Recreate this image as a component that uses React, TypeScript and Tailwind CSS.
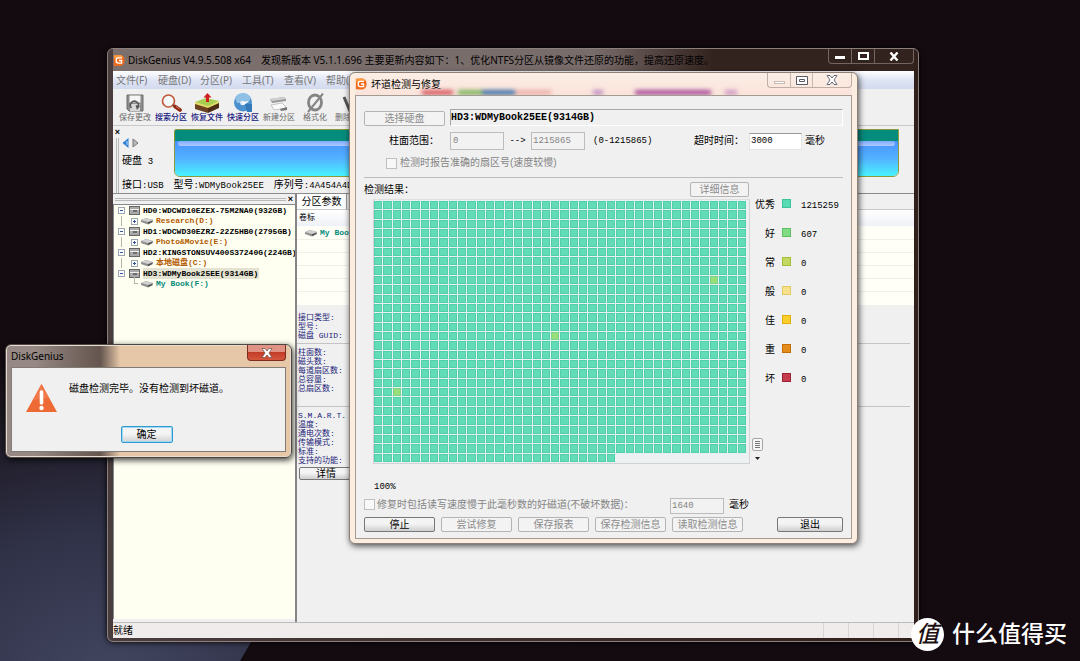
import type { ReactNode } from "react"

const TOTAL_BLOCKS = 27 * 40 + 26
const SLOW_BLOCKS = [8 * 40 + 36, 14 * 40 + 19, 20 * 40 + 2]

const MENU = ["文件(F)", "硬盘(D)", "分区(P)", "工具(T)", "查看(V)", "帮助(H)"]

const DISKS = [
  { name: "HD0:WDCWD10EZEX-75M2NA0(932GB)", part: "Research(D:)", color: "text-[#b35a00]" },
  { name: "HD1:WDCWD30EZRZ-22Z5HB0(2795GB)", part: "Photo&Movie(E:)", color: "text-[#b35a00]" },
  { name: "HD2:KINGSTONSUV400S37240G(224GB)", part: "本地磁盘(C:)", color: "text-[#b35a00]" },
  { name: "HD3:WDMyBook25EE(9314GB)", part: "My Book(F:)", color: "text-[#078a7c]", selected: true },
]

const INFO = [
  ["接口类型:", "型号:", "磁盘 GUID:"],
  ["柱面数:", "磁头数:", "每道扇区数:", "总容量:", "总扇区数:"],
  ["S.M.A.R.T. 信息:", "温度:", "通电次数:", "传输模式:", "标准:", "支持的功能:"],
]

const LEGEND = [
  { label: "优秀", color: "bg-[#58dbb2] border-[#3cc39b]", count: "1215259" },
  { label: "好", color: "bg-[#82dc86] border-[#5cc063]", count: "607" },
  { label: "常", color: "bg-[#c2d860] border-[#a2bd3a]", count: "0" },
  { label: "般", color: "bg-[#f7e18c] border-[#e2c765]", count: "0" },
  { label: "佳", color: "bg-[#fcd02c] border-[#e2ad0c]", count: "0" },
  { label: "重", color: "bg-[#e58d1c] border-[#c06f08]", count: "0" },
  { label: "坏", color: "bg-[#c53c4c] border-[#9c2233]", count: "0" },
]

const mono = "font-['Liberation_Mono','Noto_Sans_CJK_SC',monospace]"
const sans = "font-['Noto_Sans','Noto_Sans_CJK_SC',sans-serif]"

function Logo({ className }: { className: string }) {
  return (
    <svg viewBox="0 0 14 14" className={className} aria-hidden="true">
      <path d="M1 1 L9 .5 Q13.5 2 13.5 7 T9 13.5 L1 13 Z" fill="#f26a1b" />
      <path d="M1 1 L9 .5 Q11 1 12 3 L1 5 Z" fill="#fb9a3c" />
      <path d="M10.5 4 H6 Q3.7 4 3.7 7 T6 10 H10 V7 H7" fill="none" stroke="#fff" strokeWidth="1.5" />
    </svg>
  )
}

function SaveIcon() {
  return (
    <svg viewBox="0 0 20 20" className="h-5 w-5">
      <path d="M2 2 H18 V18 H4 L2 16 Z" fill="#8d8d8d" stroke="#6c6c6c" />
      <rect x="4.500" y="2.500" width="11" height="7" fill="#f4f4f4" />
      <rect x="5" y="11" width="10" height="7" fill="#d9d9d9" />
      <path d="M6.500 15 A4 4 0 1 1 13 14" fill="none" stroke="#555" strokeWidth="1.600" />
      <path d="M10.500 12 L15 13 L12 17 Z" fill="#555" />
    </svg>
  )
}

function SearchIcon() {
  return (
    <svg viewBox="0 0 22 20" className="h-5 w-[22px]">
      <circle cx="8.500" cy="8" r="6" fill="#f4f8fb" stroke="#c25a3a" strokeWidth="1.700" />
      <path d="M12.500 12 L15 13.500" stroke="#8c4a30" strokeWidth="2" />
      <path d="M15 13.500 L20 17" stroke="#8e2c18" strokeWidth="3.800" strokeLinecap="round" />
      <path d="M16 13.500 L19.500 15.800" stroke="#d8765a" strokeWidth="1" />
    </svg>
  )
}

function RecoverIcon() {
  return (
    <svg viewBox="0 0 26 20" className="h-5 w-[26px]">
      <path d="M1 10 L14 14 V20 L1 16 Z" fill="#6b4322" />
      <path d="M14 14 L25 9 V15 L14 20 Z" fill="#4c2c14" />
      <path d="M1 9 L12 5 L25 8 L14 14 Z" fill="#a9cf52" />
      <path d="M1 9 L14 13 L25 8 V10 L14 15 L1 11 Z" fill="#e3dc6a" />
      <path d="M13.500 0 L17.500 4.500 H15 V9 H12 V4.500 H9.500 Z" fill="#cf1f1f" />
    </svg>
  )
}

function QuickIcon() {
  return (
    <svg viewBox="0 0 20 20" className="h-5 w-5">
      <circle cx="10" cy="9.500" r="9" fill="#4a90cc" />
      <path d="M2 5 A9 9 0 0 1 18 5 L15 10 H4 Z" fill="#8fc0e6" />
      <path d="M12 11 H19 V19 H14 Z" fill="#3378b8" />
      <circle cx="9.500" cy="10" r="2.300" fill="#e8f2fb" />
      <path d="M10 9 L16 8 L11 12 Z" fill="#fff" />
    </svg>
  )
}

function NewIcon() {
  return (
    <svg viewBox="0 0 20 20" className="h-5 w-5">
      <path d="M1 6 L15 4 L17 6 V8 L3 10 Z" fill="#999" />
      <path d="M1 6 L15 4 L17 6 L3 8 Z" fill="#d0d0d0" />
      <path d="M2 12 L13 10 L18 15 L5 17 Z" fill="#fafafa" stroke="#b8b8b8" strokeWidth="0.800" />
      <path d="M11 16 L18 14 V17 L12 18 Z" fill="#777" />
    </svg>
  )
}

function FormatIcon() {
  return (
    <svg viewBox="0 0 20 20" className="h-5 w-5">
      <ellipse cx="10" cy="9.500" rx="6.500" ry="7.500" fill="none" stroke="#858585" strokeWidth="2.800" />
      <path d="M18 .5 L3 19" stroke="#858585" strokeWidth="2" />
    </svg>
  )
}

function DeleteIcon() {
  return (
    <svg viewBox="0 0 20 20" className="h-5 w-5">
      <path d="M3 4 L9 18 L17 3" fill="none" stroke="#555" strokeWidth="3" />
    </svg>
  )
}

const TOOLS = [
  { label: "保存更改", icon: <SaveIcon />, color: "text-[#6a6a6a]" },
  { label: "搜索分区", icon: <SearchIcon />, color: "text-[#15157e] font-medium" },
  { label: "恢复文件", icon: <RecoverIcon />, color: "text-[#15157e] font-medium" },
  { label: "快速分区", icon: <QuickIcon />, color: "text-[#15157e] font-medium" },
  { label: "新建分区", icon: <NewIcon />, color: "text-[#6a6a6a]" },
  { label: "格式化", icon: <FormatIcon />, color: "text-[#6a6a6a]" },
  { label: "删除分区", icon: <DeleteIcon />, color: "text-[#6a6a6a]" },
]

function DriveIcon() {
  return (
    <svg viewBox="0 0 12 8" className="h-2 w-3 shrink-0">
      <path d="M0 3 L5 1 L12 3 V5 L7 7.500 L0 5 Z" fill="#8f8f8f" />
      <path d="M0 3 L5 1 L12 3 L7 5 Z" fill="#d0d0d0" />
      <path d="M7 5.500 L11 4 V5 L7 7 Z" fill="#444" />
    </svg>
  )
}

function DiskIcon() {
  return (
    <svg viewBox="0 0 11 9" className="h-[9px] w-[11px] shrink-0">
      <rect x=".5" y=".5" width="10" height="8" fill="#a9a9a9" stroke="#666" />
      <path d="M1 3.500 H10" stroke="#eee" />
      <path d="M4 5 H8" stroke="#333" />
    </svg>
  )
}

function Expander({ open }: { open?: boolean }) {
  return (
    <svg viewBox="0 0 7 7" className="z-10 h-[7px] w-[7px] shrink-0">
      <rect x=".5" y=".5" width="6" height="6" fill="#fff" stroke="#9aa6b4" />
      <path d={open ? "M2 3.500 H5" : "M2 3.500 H5 M3.500 2 V5"} stroke="#35559c" />
    </svg>
  )
}

function FlatButton({ children, className }: { children: ReactNode; className: string }) {
  return (
    <button disabled className={`h-[15px] rounded-xs border border-[#b4b4b4] bg-[#f3f3f3] text-[10px] leading-none text-[#8c8c8c] ${className}`}>
      {children}
    </button>
  )
}

function DialogButton({ children, className }: { children: ReactNode; className: string }) {
  return (
    <button className={`h-[15px] rounded-xs border border-[#777] bg-linear-to-b from-[#f4f4f4] from-45% to-[#cfcfcf] text-[10px] leading-none text-black ${className}`}>
      {children}
    </button>
  )
}

function DiskTree() {
  return (
    <ul className={`flex-1 border-t border-l border-[#828790] bg-[#fefff0] pl-[4px] text-[8px] font-bold ${mono}`}>
      {DISKS.map((disk) => (
        <li key={disk.name}>
          <div className="flex h-[11px] items-center gap-1 whitespace-nowrap">
            <Expander open />
            <DiskIcon />
            <span className={disk.selected ? "-ml-px bg-[#e4e2d0] pr-px leading-[11px] text-black" : "-ml-px leading-[11px] text-black"}>{disk.name}</span>
          </div>
          <div className={`ml-[3px] flex h-[10px] items-center gap-[3px] border-[#b5b5a8] pl-[9px] whitespace-nowrap ${disk.selected ? "" : "border-l"}`}>
            {disk.selected ? <span className="-mt-2 ml-1 h-2 w-1 border-b border-l border-[#b5b5a8]" /> : <Expander />}
            <DriveIcon />
            <span className={`leading-[10px] ${disk.color}`}>{disk.part}</span>
          </div>
        </li>
      ))}
    </ul>
  )
}

function DiskBar() {
  return (
    <section className="flex h-[68px] border-b border-[#8a8a8a] bg-[#f0f0f0]">
      <div className="flex w-[9px] flex-col items-center gap-[2px] pt-[2px]">
        <button aria-label="关闭" className="text-[9px] leading-[8px] font-bold text-black">×</button>
        <span className="w-[3px] flex-1 border-x border-[#b9b9b9]" />
      </div>
      <div className="flex flex-1 flex-col pr-[15px]">
        <div className="flex flex-1 pt-[3px]">
          <div className="w-[52px] pt-[9px]">
            <div className="flex gap-[3px]">
              <svg viewBox="0 0 7 10" className="h-[10px] w-[7px]"><path d="M6.500 0 V10 L.5 5 Z" fill="#2a7fd4" /><path d="M5 3 V7" stroke="#bfe2ff" /></svg>
              <svg viewBox="0 0 7 10" className="h-[10px] w-[7px]"><path d="M1 1 V9 L6 5 Z" fill="#bbb" stroke="#777" /></svg>
            </div>
            <p className="mt-[6px] text-[10px] leading-[14px] text-black">硬盘 <span className={`ml-[3px] text-[9px] ${mono}`}>3</span></p>
          </div>
          <div className="flex h-[48px] flex-1 flex-col overflow-hidden rounded-tl-xs rounded-b-md border border-[#8b9a3a]">
            <div className="h-[11px] bg-[#058c7d]" />
            <div className="flex-1 bg-linear-to-b from-[#4c92ff] via-[#51b2ff] to-[#48f2ff] px-[3px]">
              <div className="h-[5px] rounded-full bg-linear-to-b from-[#7dacff] to-[#b0c9ff]" />
            </div>
          </div>
        </div>
        <p className={`flex gap-[10px] text-[10px] leading-[14px] whitespace-nowrap text-black ${sans}`}>
          <span>接口<span className={`text-[9px] ${mono}`}>:USB</span></span>
          <span>型号<span className={`text-[9px] ${mono}`}>:WDMyBook25EE</span></span>
          <span>序列号<span className={`text-[9px] ${mono}`}>:4A454A4D</span></span>
        </p>
      </div>
    </section>
  )
}

function DetailPane() {
  return (
    <section className="flex flex-1 flex-col overflow-hidden border-l-2 border-[#858585] bg-[#f0f0f0]">
      <div className="flex h-[16px] items-end border-b border-[#c8c8c8]">
        <button className="h-[15px] w-[50px] border-r border-[#999] bg-white text-[10px] leading-[14px] whitespace-nowrap text-black">分区参数</button>
      </div>
      <div className="flex h-[16px] items-center bg-linear-to-b from-white to-[#eef1f8] pl-[2px] text-[8px] text-black">卷标</div>
      <div className="divide-y divide-[#f0efe8] bg-[#fffff8]">
        <div className={`flex h-[14px] items-center gap-[3px] pl-[8px] text-[8px] font-bold text-[#078a7c] ${mono}`}>
          <DriveIcon />
          My Book(F:)
        </div>
        {[0, 1, 2, 3, 4].map((row) => <div key={row} className="h-[13px]" />)}
      </div>
      <div className={`pt-[5px] text-[8px] leading-[9px] text-[#1c1c78] ${mono}`}>
        {INFO.map((group, i) => (
          <div key={i} className={i ? "mr-[4px] border-t border-[#c4c4c4] pt-[4px]" : "pt-[3px] pb-[3px]"}>
            {group.map((line) => <p key={line} className="pl-px whitespace-nowrap">{line}</p>)}
            {i === 1 && <div className="h-[13px]" />}
          </div>
        ))}
      </div>
      <DialogButton className="mt-[2px] ml-[2px] h-[13px]! w-[54px]">详情</DialogButton>
    </section>
  )
}

function MainWindow() {
  return (
    <main className="absolute top-[48px] left-[107px] flex h-[594px] w-[812px] flex-col rounded-md border border-[#8b7f7c] bg-linear-to-r from-[#4a3d3d] to-[#30201c] pr-[4px] pb-[3px] pl-[5px] shadow-[0_0_6px_#000]">
      <header className="flex h-[22px] shrink-0 items-center gap-[3px] bg-linear-to-r from-[#7c706f] via-[#786c6a] via-60% to-[#33231f] to-75%">
        <Logo className="h-[13px] w-3" />
        <h1 className={`flex flex-1 gap-[10px] text-[10px] whitespace-nowrap text-black ${sans}`}>
          <span>DiskGenius V4.9.5.508 x64</span>
          <span>发现新版本 V5.1.1.696 主要更新内容如下：1、优化NTFS分区从镜像文件还原的功能，提高还原速度。</span>
        </h1>
        <div className="flex h-[15px] divide-x divide-[#75645f] self-start rounded-b-sm border border-t-0 border-[#75645f]">
          <button aria-label="最小化" className="flex w-[23px] items-end justify-center pb-[4px]"><span className="h-[3px] w-[10px] bg-white" /></button>
          <button aria-label="最大化" className="flex w-[23px] items-center justify-center"><span className="h-2 w-[11px] border-2 border-white" /></button>
          <button aria-label="关闭" className="flex w-[38px] items-center justify-center">
            <svg viewBox="0 0 10 9" className="h-[9px] w-[10px]"><path d="M1.500 .5 L8.500 8.500 M8.500 .5 L1.500 8.500" stroke="#fff" strokeWidth="2.400" /></svg>
          </button>
        </div>
      </header>
      <div className="flex flex-1 flex-col overflow-hidden bg-[#f0f0f0]">
        <nav className={`flex h-[18px] shrink-0 items-center gap-[7px] bg-linear-to-b from-white via-[#dfe5f5] to-[#d3daee] pl-[3px] text-[10px] text-[#777] ${sans}`}>
          {MENU.map((item) => <button key={item} className="w-[35px] text-left whitespace-nowrap">{item}</button>)}
        </nav>
        <div className="flex h-[37px] shrink-0 border-b border-[#c9c9c9] pl-[4px]">
          {TOOLS.map((tool) => (
            <button key={tool.label} className={`flex w-[36px] flex-col items-center pt-[4px] text-[8px] leading-[10px] whitespace-nowrap ${tool.color}`}>
              {tool.icon}
              {tool.label}
            </button>
          ))}
        </div>
        <DiskBar />
        <div className="flex flex-1 overflow-hidden">
          <aside className="flex w-[182px] flex-col pb-[3px]">
            <div className="flex h-[10px] items-center gap-[2px] px-[2px]">
              <span className="h-[3px] flex-1 border-y border-[#b9b9b9]" />
              <button aria-label="关闭" className="text-[9px] leading-none font-bold text-black">×</button>
            </div>
            <DiskTree />
          </aside>
          <DetailPane />
        </div>
        <footer className="flex h-[16px] shrink-0 items-center border-t border-[#bcbcbc] bg-[#f0eceb] text-[10px] leading-none text-black">
          <span className="flex-1">就绪</span>
          <span className="flex h-full w-[91px] divide-x divide-[#ddd4d2] overflow-hidden border-l border-[#ddd4d2]">
            {[0, 1, 2, 3].map((cell) => <span key={cell} className="w-[25px] shrink-0" />)}
          </span>
        </footer>
      </div>
    </main>
  )
}

function BlockMap() {
  return (
    <div className="h-[265px] w-[377px] border border-[#d2d2d2] border-t-[#e0e0e0] bg-[#eef1f1] pt-px pr-[3px] pb-px">
      <div className="grid h-full grid-cols-[repeat(40,minmax(0,1fr))] grid-rows-[repeat(28,minmax(0,1fr))] gap-px">
        {Array.from({ length: TOTAL_BLOCKS }, (_, i) => (
          <span key={i} className={SLOW_BLOCKS.includes(i) ? "border border-[#7bd28a] bg-[#98df78]" : "border border-[#4fd0aa] bg-[#62dbb7]"} />
        ))}
      </div>
    </div>
  )
}

function RepairDialog() {
  return (
    <section role="dialog" aria-label="坏道检测与修复" className="absolute top-[72px] left-[349px] flex h-[472px] w-[509px] flex-col rounded-md border border-[#8c8078] bg-[#fbeee0] px-[5px] pb-[4px] shadow-[1px_2px_6px_rgba(0,0,0,0.7)]">
      <header className="relative flex h-[22px] shrink-0 items-center gap-1 overflow-hidden bg-linear-to-b from-[#fbeee5] to-[#fae3da]">
        <div className="absolute bottom-0 left-[67px] flex h-[5px] blur-[2px]">
          <span className="w-[31px] bg-[#d65a62]" />
          <span className="ml-[5px] w-[24px] bg-[#7db35b]" />
          <span className="w-[33px] bg-[#3d70a6]" />
          <span className="w-[36px] bg-[#ecb2ac]" />
          <span className="ml-[42px] w-[10px] bg-[#c090c4]" />
          <span className="ml-[32px] w-[76px] bg-[#a84f9d]" />
          <span className="ml-[14px] w-[12px] bg-[#d099c4]" />
        </div>
        <Logo className="z-10 h-[14px] w-3" />
        <h2 className={`z-10 flex-1 text-[10px] text-black ${sans}`}>坏道检测与修复</h2>
        <div className="z-10 flex h-[15px] divide-x divide-[#cbb8ad] self-start rounded-b-sm border border-t-0 border-[#c0aea4]">
          <button aria-label="最小化" className="flex w-[23px] items-end justify-center pb-[3px]"><span className="h-[3px] w-[11px] border border-[#c4b9b3] bg-white" /></button>
          <button aria-label="最大化" className="flex w-[22px] items-center justify-center">
            <svg viewBox="0 0 12 9" className="h-[9px] w-3"><path d="M.5 .5 H11.500 V8.500 H.5 Z M3.500 3.500 H8.500 V5.500 H3.500 Z" fill="#fff" stroke="#555a66" /></svg>
          </button>
          <button aria-label="关闭" className="flex w-[38px] items-center justify-center">
            <svg viewBox="0 0 12 10" className="h-[10px] w-3"><path d="M1 .5 H4 L6 3 L8 .5 H11 L8 5 L11 9.500 H8 L6 7 L4 9.500 H1 L4 5 Z" fill="#fff" stroke="#676c78" /></svg>
          </button>
        </div>
      </header>
      <div className="flex flex-1 flex-col border border-[#a39a94] bg-[#f0f0f0] pl-[8px] text-[10px] leading-[14px] text-black">
        <div className="mt-[13px] flex gap-[5px] pr-[8px]">
          <FlatButton className="mt-[2px] w-[81px]">选择硬盘</FlatButton>
          <p className={`h-[17px] flex-1 border border-t-[#a8a8a8] border-r-white border-b-white border-l-[#a8a8a8] text-[10px] leading-[15px] font-bold ${mono}`}>HD3:WDMyBook25EE(9314GB)</p>
        </div>
        <div className="mt-[6px] flex h-[18px] items-center pl-[25px]">
          <label htmlFor="from" className="w-[61px]">柱面范围：</label>
          <input id="from" disabled defaultValue="0" className={`h-[18px] w-[54px] border border-[#bcbcbc] bg-[#f2f2f2] px-[2px] text-[9px] text-[#858585] ${mono}`} />
          <span className={`w-[27px] text-center text-[9px] ${mono}`}>--&gt;</span>
          <input aria-label="结束柱面" disabled defaultValue="1215865" className={`h-[18px] w-[54px] border border-[#bcbcbc] bg-[#f2f2f2] px-px text-[9px] text-[#858585] ${mono}`} />
          <span className={`ml-[8px] flex-1 text-[9px] ${mono}`}>(0-1215865)</span>
          <label htmlFor="timeout" className="w-[55px]">超时时间：</label>
          <input id="timeout" defaultValue="3000" className={`h-[17px] w-[53px] border border-[#e4e4e4] border-t-[#999] bg-white px-px text-[9px] text-black ${mono}`} />
          <span className="ml-[3px] w-[46px]">毫秒</span>
        </div>
        <label className="mt-[5px] ml-[22px] flex h-[16px] items-center gap-[3px] text-[#858585]">
          <input type="checkbox" disabled className="h-[11px] w-[11px] appearance-none border border-[#c0c0c0] bg-[#f8f8f8]" />
          检测时报告准确的扇区号(速度较慢)
        </label>
        <hr className="mt-[6px] mr-[8px] border-t border-[#bdbdbd]" />
        <div className="mt-[3px] flex h-[17px] items-center">
          <span className="flex-1">检测结果：</span>
          <FlatButton className="mr-[102px] w-[59px]">详细信息</FlatButton>
        </div>
        <div className="mt-px ml-[9px] flex">
          <BlockMap />
          <div className="relative flex-1">
            <ul className="flex flex-col pl-[5px]">
              {LEGEND.map((item) => (
                <li key={item.label} className="flex h-[29px] items-start">
                  <span className="w-[20px] pt-px text-right leading-[10px]">{item.label}</span>
                  <i className={`ml-[7px] h-[9px] w-[9px] border ${item.color}`} />
                  <span className={`ml-[10px] pt-[2px] text-[9px] leading-[10px] ${mono}`}>{item.count}</span>
                </li>
              ))}
            </ul>
            <div className="absolute bottom-[4px] left-[2px] flex flex-col items-center gap-[6px]">
              <span className="flex h-[13px] w-[11px] flex-col justify-center gap-px rounded-xs border border-[#a6a6a6] bg-[#f6f6f6] px-[2px]">
                <i className="h-px bg-[#777]" /><i className="h-px bg-[#777]" /><i className="h-px bg-[#777]" /><i className="h-px bg-[#777]" />
              </span>
              <svg viewBox="0 0 5 3" className="h-[3px] w-[5px]"><path d="M0 0 H5 L2.500 3 Z" fill="#222" /></svg>
            </div>
          </div>
        </div>
        <p className={`mt-[16px] ml-[10px] text-[9px] ${mono}`}>100%</p>
        <div className="mt-[2px] flex h-[17px] items-center">
          <label className="flex w-[306px] items-center gap-[2px] text-[#858585]">
            <input type="checkbox" disabled className="h-[11px] w-[11px] appearance-none border border-[#c0c0c0] bg-[#f8f8f8]" />
            修复时包括读写速度慢于此毫秒数的好磁道(不破坏数据)：
          </label>
          <input aria-label="毫秒数" disabled defaultValue="1640" className={`mt-[3px] h-[16px] w-[54px] border border-[#bcbcbc] bg-[#f2f2f2] px-px text-[9px] text-[#858585] ${mono}`} />
          <span className="ml-[5px]">毫秒</span>
        </div>
        <div className="mt-[4px] flex gap-[6px] pr-[8px]">
          <DialogButton className="w-[71px]">停止</DialogButton>
          <FlatButton className="w-[71px]">尝试修复</FlatButton>
          <FlatButton className="w-[71px]">保存报表</FlatButton>
          <FlatButton className="w-[71px]">保存检测信息</FlatButton>
          <FlatButton className="w-[71px]">读取检测信息</FlatButton>
          <DialogButton className="ml-auto w-[66px]">退出</DialogButton>
        </div>
      </div>
    </section>
  )
}

function MessageBox() {
  return (
    <section role="alertdialog" aria-label="DiskGenius" className="absolute top-[344px] left-[5px] flex h-[114px] w-[287px] flex-col rounded-md border border-[#4d4642] bg-linear-to-r from-[#968884] from-10% via-[#64554e] via-33% to-[#e6c7a8] to-40% px-[5px] pb-[5px] shadow-[1px_2px_6px_rgba(0,0,0,0.8)] inset-ring inset-ring-[#e8dcd0]">
      <header className="flex h-[22px] shrink-0 items-center">
        <h2 className={`flex-1 text-[10px] text-black ${sans}`}>DiskGenius</h2>
        <button aria-label="关闭" className="flex h-[16px] w-[39px] items-center justify-center self-start rounded-b-sm border border-t-0 border-[#7d2c22] bg-linear-to-b from-[#e09384] from-45% via-[#c23d28] via-50% to-[#d6563d]">
          <svg viewBox="0 0 12 10" className="h-[10px] w-3"><path d="M1 .5 H4 L6 3 L8 .5 H11 L8 5 L11 9.500 H8 L6 7 L4 9.500 H1 L4 5 Z" fill="#fff" stroke="#6c4a48" strokeWidth="0.700" /></svg>
        </button>
      </header>
      <div className="flex flex-1 flex-col items-center border border-[#827a74] bg-[#f0f0f0] text-[10px] text-black">
        <div className="flex w-full gap-[11px] pt-[15px] pl-[13px]">
          <svg viewBox="0 0 33 30" className="h-[30px] w-[33px]">
            <path d="M16.500 1 L32 29 H1 Z" fill="#ee6a34" />
            <path d="M16.500 1 L24 15 L8 17 Z" fill="#f0784a" />
            <path d="M16.500 9 V20" stroke="#fff" strokeWidth="3.600" strokeLinecap="round" />
            <circle cx="16.500" cy="25" r="2.200" fill="#fff" />
          </svg>
          <p className="leading-[12px]">磁盘检测完毕。没有检测到坏磁道。</p>
        </div>
        <button className="mt-[13px] mr-[4px] h-[17px] w-[52px] rounded-xs border border-[#2f9bd0] bg-linear-to-b from-[#f4f4f4] from-45% to-[#d2d2d2] leading-none inset-ring inset-ring-[#9ed8f4]">确定</button>
      </div>
    </section>
  )
}

function Watermark() {
  return (
    <div className="absolute right-[13px] bottom-[10px] flex items-center gap-[8px] text-white">
      <span className="flex h-[33px] w-[33px] items-center justify-center rounded-full bg-white text-[23px] leading-none font-medium text-[#1d1012] italic">值</span>
      <span className="text-[23px] leading-[34px] font-medium whitespace-nowrap">什么值得买</span>
    </div>
  )
}

export default function App() {
  return (
    <div className="relative h-screen overflow-hidden bg-[#140b10] bg-[radial-gradient(ellipse_420px_330px_at_110px_680px,#424660,#303248_45%,transparent)] font-['Liberation_Sans','Noto_Sans_CJK_SC',sans-serif]">
      <svg viewBox="0 0 840 40" preserveAspectRatio="none" className="absolute right-0 bottom-0 left-[240px] h-[40px] w-[840px]">
        <path d="M0 40 L14 16 L30 0 H840 V40 Z" fill="#140b10" />
      </svg>
      <MainWindow />
      <RepairDialog />
      <MessageBox />
      <Watermark />
    </div>
  )
}
